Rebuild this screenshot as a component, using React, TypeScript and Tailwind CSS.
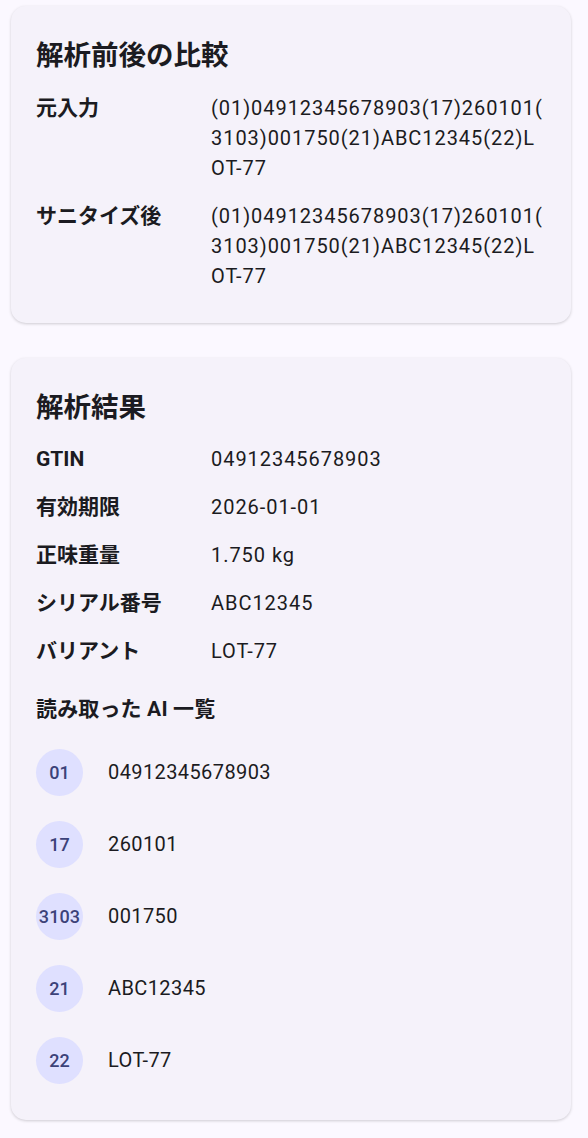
import React from 'react';

const raw = '(01)04912345678903(17)260101(3103)001750(21)ABC12345(22)LOT-77';

const fields = [
  { label: 'GTIN', value: '04912345678903' },
  { label: '有効期限', value: '2026-01-01' },
  { label: '正味重量', value: '1.750 kg' },
  { label: 'シリアル番号', value: 'ABC12345' },
  { label: 'バリアント', value: 'LOT-77' },
];

const ais = [
  { ai: '01', value: '04912345678903' },
  { ai: '17', value: '260101' },
  { ai: '3103', value: '001750' },
  { ai: '21', value: 'ABC12345' },
  { ai: '22', value: 'LOT-77' },
];

function Row({ label, value }: { label: string; value: string }) {
  return (
    <div className="flex items-start">
      <div className="w-[175px] shrink-0 text-[21px] leading-[30px] font-bold text-[#1b1b21]">
        {label}
      </div>
      <div className="w-[334px] text-[20px] leading-[30px] tracking-[0.95px] text-[#1b1b21] break-all [line-break:anywhere]">
        {value}
      </div>
    </div>
  );
}

function Card({ title, children }: { title: string; children: React.ReactNode }) {
  return (
    <div className="ml-[11px] w-[560px] rounded-[15px] bg-[#f5f2fa] shadow-[0_1px_3px_rgba(0,0,0,0.18)] px-[25px] pt-[32px]">
      <h2 className="text-[27.5px] leading-[36px] font-bold text-[#1b1b21]">{title}</h2>
      {children}
    </div>
  );
}

export default function App() {
  return (
    <div className="min-h-screen bg-[#fbf8ff] pt-[6px] pb-6 font-['Roboto','Noto_Sans_CJK_JP',sans-serif]">
      <Card title="解析前後の比較">
        <div className="mt-[19px] pb-[32px] flex flex-col gap-[18px]">
          <Row label="元入力" value={raw} />
          <Row label="サニタイズ後" value={raw} />
        </div>
      </Card>

      <div className="h-[35px]" />

      <Card title="解析結果">
        <div className="mt-[18px] flex flex-col gap-[18px]">
          {fields.map((f) => (
            <Row key={f.label} label={f.label} value={f.value} />
          ))}
        </div>

        <h3 className="mt-[29px] text-[21px] leading-[28px] font-bold tracking-[0.15px] text-[#1b1b21]">
          読み取った AI 一覧
        </h3>

        <ul className="mt-[13px] pb-[24px]">
          {ais.map((a) => (
            <li key={a.ai} className="h-[72px] flex items-center">
              <div className="w-[47px] h-[47px] shrink-0 rounded-full bg-[#dfe0ff] flex items-center justify-center text-[18px] font-medium tracking-[0.1px] text-[#3c4279]">
                {a.ai}
              </div>
              <span className="ml-[25px] text-[20px] tracking-[0.4px] text-[#1b1b21]">{a.value}</span>
            </li>
          ))}
        </ul>
      </Card>
    </div>
  );
}
